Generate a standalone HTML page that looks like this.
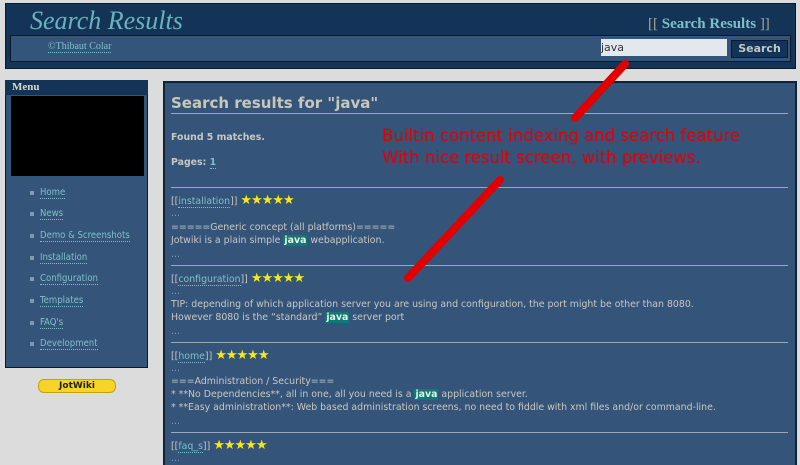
<!DOCTYPE html>
<html><head><style>
html,body{margin:0;width:800px;height:465px;overflow:hidden}
body{background:#dcdcdc;position:relative;font-family:"DejaVu Sans",sans-serif;}
.a{position:absolute}
#hd{left:5px;top:3px;width:789px;height:64px;background:#133456;border:1px solid #0a1a2c}
#title{left:30px;top:6px;font-family:"Liberation Serif",serif;font-style:italic;font-size:26px;color:#69b3bd}
#bar{left:10px;top:35px;width:779px;height:25px;background:#34547a;border:1px solid #0a1a2c}
#copy{left:48px;top:41px;font-family:"Liberation Serif",serif;font-size:10px;color:#7ec0c8;border-bottom:1px dotted #7ec0c8}
#sr{left:648px;top:16px;font-family:"Liberation Serif",serif;font-weight:bold;font-size:15px;color:#7ec0c8}
#sr span{color:#a8a898;font-weight:normal}
#inp{left:601px;top:39px;width:126px;height:17px;background:#e2e8ee;font-size:11px;color:#333;line-height:17px}
#btn{left:731px;top:40px;width:55px;height:16px;background:#133456;border:1px solid #0a1a2c;color:#c0c8c8;font-weight:bold;font-size:11px;text-align:center;line-height:16px}
#menu{left:5px;top:80px;width:141px;height:287px;background:#34547a;border:1px solid #0a1a2c;border-top:0}
#mh{left:5px;top:80px;width:143px;height:15px;background:#133456;font-family:"Liberation Serif",serif;font-weight:bold;font-size:11px;color:#d8d8d0;text-indent:7px;line-height:15px}
#blk{left:11px;top:96px;width:133px;height:80px;background:#000}
.m{position:absolute;left:30px;font-size:9.5px;color:#7ec0c8;font-stretch:condensed}
.m i{display:inline-block;width:4px;height:4px;background:#7e9ab0;margin-right:6px;vertical-align:middle}
.m u{text-decoration:none;border-bottom:1px dotted #7ec0c8}
#jw{left:38px;top:379px;width:76px;height:12px;background:#f6d428;border:1px solid #c8a000;border-radius:6px;font-size:9px;font-weight:bold;text-align:center;line-height:12px;color:#222}
#main{left:163px;top:81px;width:630px;height:390px;background:#34547a;border:2px solid #0f2238}
.t{position:absolute;left:171px;font-size:9.4px;color:#c8c8c0;white-space:nowrap}
.hr{position:absolute;left:171px;width:617px;height:1px;background:#9aa8b8}
.l{color:#7ec0c8;border-bottom:1px dotted #7ec0c8}
.j{background:#0e7a78;color:#e8f0e0;font-weight:bold;padding:0 1px}
.st{color:#f8e818;font-size:13px;letter-spacing:-1px}
.d{color:#8898a8}
.red{position:absolute;color:#e00000;font-size:16.5px;left:382px;white-space:nowrap}
</style></head><body>
<div id="hd" class="a"></div>
<div id="title" class="a">Search Results</div>
<div id="sr" class="a"><span>[[</span> Search Results <span>]]</span></div>
<div id="bar" class="a"></div>
<div id="copy" class="a">©Thibaut Colar</div>
<div id="inp" class="a">java</div>
<div id="btn" class="a">Search</div>

<div id="menu" class="a"></div>
<div id="mh" class="a">Menu</div>
<div id="blk" class="a"></div>
<div class="m" style="top:187px"><i></i><u>Home</u></div>
<div class="m" style="top:208px"><i></i><u>News</u></div>
<div class="m" style="top:230px"><i></i><u>Demo &amp; Screenshots</u></div>
<div class="m" style="top:252px"><i></i><u>Installation</u></div>
<div class="m" style="top:273px"><i></i><u>Configuration</u></div>
<div class="m" style="top:295px"><i></i><u>Templates</u></div>
<div class="m" style="top:317px"><i></i><u>FAQ's</u></div>
<div class="m" style="top:338px"><i></i><u>Development</u></div>
<div id="jw" class="a">JotWiki</div>

<div id="main" class="a"></div>
<div class="t" style="top:94px;font-size:15px;font-weight:bold;color:#c8c8b8">Search results for "java"</div>
<div class="hr" style="top:113px"></div>
<div class="t" style="top:132px;font-weight:bold">Found 5 matches.</div>
<div class="t" style="top:157px;font-weight:bold">Pages: <span class="l">1</span></div>
<div class="hr" style="top:187px"></div>
<div class="t" style="top:193px">[[<span class="l">installation</span>]] <span class="st">★★★★★</span></div>
<div class="t d" style="top:208px">...</div>
<div class="t" style="top:222px">=====Generic concept (all platforms)=====</div>
<div class="t" style="top:235px">Jotwiki is a plain simple <span class="j">java</span> webapplication.</div>
<div class="t d" style="top:249px">...</div>
<div class="hr" style="top:265px"></div>
<div class="t" style="top:271px">[[<span class="l">configuration</span>]] <span class="st">★★★★★</span></div>
<div class="t d" style="top:286px">...</div>
<div class="t" style="top:299px">TIP: depending of which application server you are using and configuration, the port might be other than 8080.</div>
<div class="t" style="top:312px">However 8080 is the “standard” <span class="j">java</span> server port</div>
<div class="t d" style="top:326px">...</div>
<div class="hr" style="top:342px"></div>
<div class="t" style="top:348px">[[<span class="l">home</span>]] <span class="st">★★★★★</span></div>
<div class="t d" style="top:363px">...</div>
<div class="t" style="top:376px">===Administration / Security===</div>
<div class="t" style="top:389px">* **No Dependencies**, all in one, all you need is a <span class="j">java</span> application server.</div>
<div class="t" style="top:402px">* **Easy administration**: Web based administration screens, no need to fiddle with xml files and/or command-line.</div>
<div class="t d" style="top:416px">...</div>
<div class="hr" style="top:432px"></div>
<div class="t" style="top:438px">[[<span class="l">faq_s</span>]] <span class="st">★★★★★</span></div>
<div class="t d" style="top:453px">...</div>

<div class="red" style="top:126px">Builtin content indexing and search feature</div>
<div class="red" style="top:148px">With nice result screen, with previews.</div>
<svg class="a" style="left:0;top:0" width="800" height="465"><g stroke="#e00000" stroke-width="8" stroke-linecap="round"><line x1="625" y1="64" x2="575" y2="118"/><line x1="500" y1="180" x2="408" y2="278"/></g></svg>
</body></html>
